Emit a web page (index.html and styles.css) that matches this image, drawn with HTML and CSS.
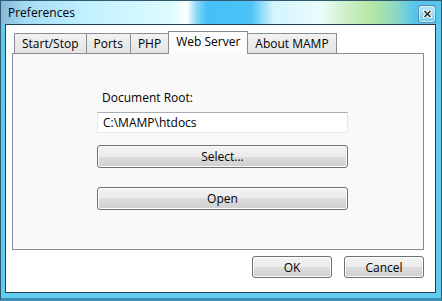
FILE: index.html
```html
<!DOCTYPE html>
<html lang="en">
<head>
    <meta charset="UTF-8">
    <title>Preferences</title>
    <link rel="stylesheet" href="styles.css">
</head>
<body>

<div class="window">
    <div class="titlebar">
        <span class="title">Preferences</span>
        <button class="close"><svg width="9" height="8" viewBox="0 0 9 8"><path d="M1.5 1 L7.5 7 M7.5 1 L1.5 7" stroke="#fff" stroke-width="3.4" stroke-linecap="round"/><path d="M1.5 1 L7.5 7 M7.5 1 L1.5 7" stroke="#2b2b2b" stroke-width="1.6"/></svg></button>
    </div>

    <div class="client">
        <div class="tabs">
            <div class="tab">Start/Stop</div>
            <div class="tab">Ports</div>
            <div class="tab">PHP</div>
            <div class="tab active">Web Server</div>
            <div class="tab">About MAMP</div>
        </div>

        <div class="pane">
            <div class="form">
                <label for="docroot">Document Root:</label>
                <input type="text" id="docroot" value="C:\MAMP\htdocs">
                <button class="btn select">Select...</button>
                <button class="btn open">Open</button>
            </div>
        </div>

        <div class="footer">
            <button class="btn">OK</button>
            <button class="btn">Cancel</button>
        </div>
    </div>
</div>

</body>
</html>
```

FILE: styles.css
```css
body { margin: 0; font-family: "Open Sans", "Noto Sans", Arial, sans-serif; font-size: 12px; color: #000; }
.window { width: 442px; height: 301px; box-sizing: border-box; display: flex; flex-direction: column; border: 1px solid #2f5a70; border-bottom: 3px solid #3a8fb0; background: linear-gradient(#7cc9ea, #5ec8ef 40px, #62cbf0); }

/* title bar */
.titlebar { height: 23px; flex: none; display: flex; align-items: flex-start; background: linear-gradient(to right, #86b8d6 0, #a5dcf4 25px, #c4f1fe 90px, #dcfbff 170px, #ffffff 186px, #86d6f8 196px, #47bff6 206px, #4cc2f6 250px, #d2f5fd 272px, #ecfcfc 320px, #cdf0c9 345px, #b3e6a2 372px, #8cd8c6 395px, #56c4ef 414px, #58c6f0 100%); }
.title { padding-left: 7px; line-height: 23px; }
.close { margin: 4px 5px 0 auto; width: 18px; height: 18px; padding: 0; display: flex; align-items: center; justify-content: center; border: 1px solid rgba(50, 80, 110, 0.55); border-radius: 3px; background: linear-gradient(rgba(255,255,255,0.55), rgba(255,255,255,0.2)); box-shadow: inset 0 0 0 1px rgba(255,255,255,0.5); }

/* client area */
.client { flex: 1; margin: 0 5px 5px 4px; border: 1px solid #1f3f52; background: #fff; display: flex; flex-direction: column; }

.tabs { display: flex; align-items: flex-end; padding: 6px 0 0 8px; position: relative; z-index: 1; }
.tab { height: 19px; line-height: 19px; padding: 0 7px; margin-left: -1px; border: 1px solid #898c95; border-bottom: none; background: linear-gradient(#f2f2f2, #e4e4e4); white-space: nowrap; }
.tab:first-child { margin-left: 0; }
.tab.active { height: 19px; padding-bottom: 3px; margin-bottom: -1px; background: #fcfcfc; position: relative; }

.pane { height: 195px; margin: 0 11px 0 6px; border: 1px solid #898c95; background: #f9f9f9; }
.form { width: 251px; margin-left: 84px; padding-top: 36px; display: flex; flex-direction: column; }
.form label { line-height: 16px; padding-left: 5px; margin-bottom: 6px; }
.form input { height: 21px; box-sizing: border-box; padding: 0 5px; border: 1px solid #e3e9ef; border-top-color: #abadb3; font: inherit; color: #000; margin-bottom: 12px; }

.btn { height: 23px; padding: 0; font: inherit; color: #000; border: 1px solid #707070; border-radius: 3px; background: linear-gradient(#f2f2f2 0%, #ebebeb 50%, #dddddd 50%, #cfcfcf 100%); box-shadow: inset 0 0 0 1px #fcfcfc; }
.btn.select { margin-bottom: 19px; }

.footer { display: flex; justify-content: flex-end; gap: 12px; padding: 6px 11px 0 0; }
.footer .btn { width: 80px; height: 22px; }
```
